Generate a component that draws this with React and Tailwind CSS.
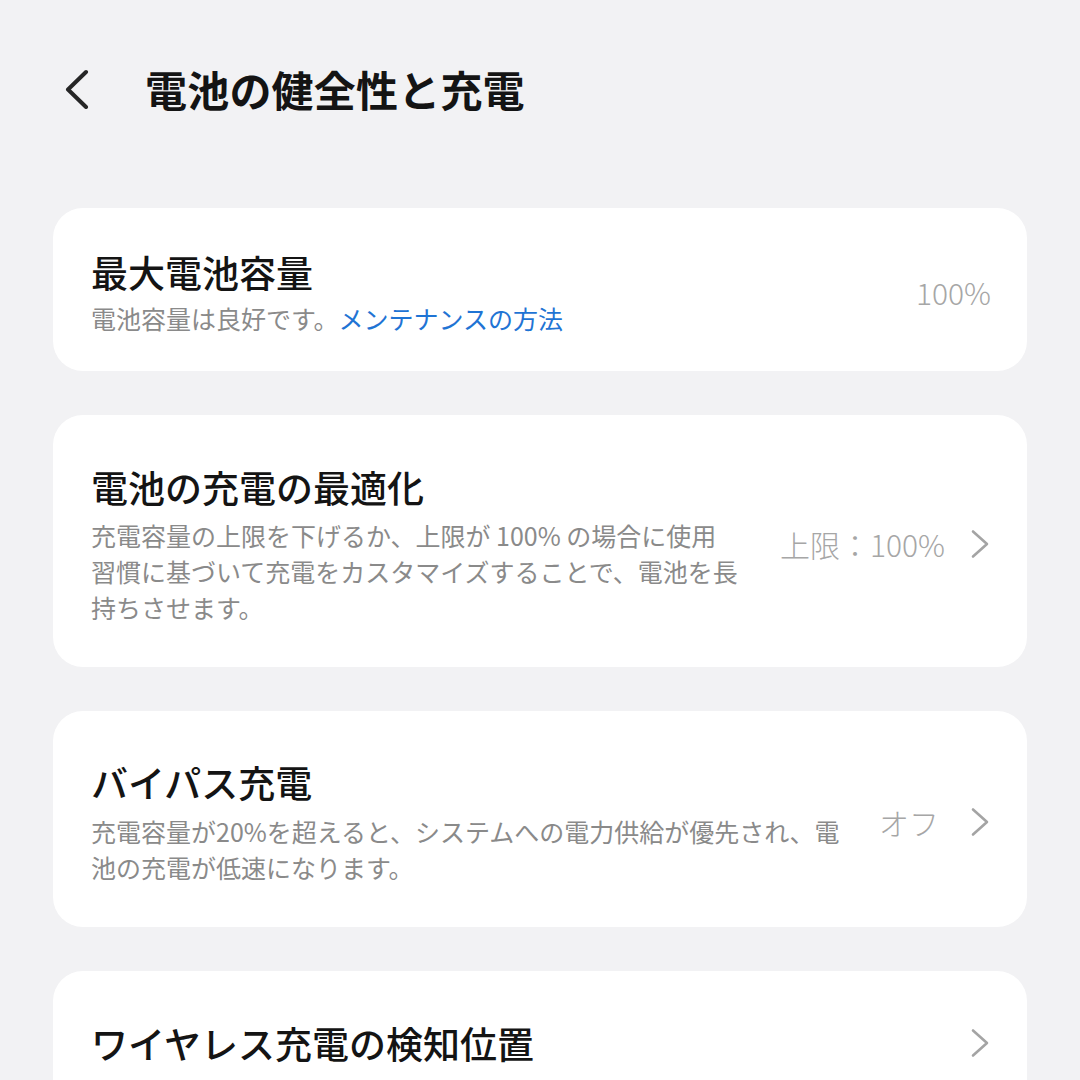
import React from "react";

const font = { fontFamily: '"Noto Sans CJK JP", "Noto Sans", sans-serif' };

function Chevron() {
  return (
    <svg width="22" height="30" viewBox="0 0 22 30" className="shrink-0">
      <path d="M4 2.5 L18 15 L4 27.5" fill="none" stroke="#a4a4a4" strokeWidth="2.6" strokeLinecap="round" strokeLinejoin="round" />
    </svg>
  );
}

export default function App() {
  return (
    <div className="w-[1080px] h-[1080px] overflow-hidden bg-[#f2f2f4] text-[#141414]" style={font}>
      <div className="h-[178px] flex items-center pl-[63px]">
        <svg width="28" height="40" viewBox="0 0 28 40" className="shrink-0">
          <path d="M23 3 L5 20.5 L23 38" fill="none" stroke="#262626" strokeWidth="4" strokeLinecap="round" strokeLinejoin="round" />
        </svg>
        <h1 className="ml-[54px] text-[42px] leading-[52px] font-bold tracking-[0.2px]">電池の健全性と充電</h1>
      </div>

      <div className="px-[53px] pt-[30px] flex flex-col gap-[44px]">
        {/* Card 1 */}
        <div className="bg-white rounded-[30px] pl-[38px] pr-[36px] pt-[40px] pb-[35px] flex items-center">
          <div className="flex-1 flex flex-col gap-[4px]">
            <div className="text-[37px] leading-[48px] font-medium">最大電池容量</div>
            <div className="text-[25px] leading-[36px] text-[#8a8a8a] whitespace-nowrap">
              電池容量は良好です。<span className="text-[#1f74d4]">メンテナンスの方法</span>
            </div>
          </div>
          <div className="text-[30px] leading-[40px] text-[#a6a6a6] font-light">100%</div>
        </div>

        {/* Card 2 */}
        <div className="bg-white rounded-[30px] pl-[38px] pr-[36px] pt-[48px] pb-[42px] flex items-center">
          <div className="flex-1 flex flex-col gap-[6px]">
            <div className="text-[37px] leading-[48px] font-medium">電池の充電の最適化</div>
            <div className="text-[25px] leading-[36px] text-[#8a8a8a] whitespace-nowrap flex flex-col">
              <span>充電容量の上限を下げるか、上限が 100% の場合に使用</span>
              <span>習慣に基づいて充電をカスタマイズすることで、電池を長</span>
              <span>持ちさせます。</span>
            </div>
          </div>
          <div className="flex items-center gap-[24px]">
            <div className="text-[30px] leading-[40px] text-[#a6a6a6] font-light whitespace-nowrap">上限：100%</div>
            <Chevron />
          </div>
        </div>

        {/* Card 3 */}
        <div className="bg-white rounded-[30px] pl-[38px] pr-[36px] pt-[47px] pb-[42px] flex items-center">
          <div className="flex-1 flex flex-col gap-[7px]">
            <div className="text-[37px] leading-[48px] font-medium">バイパス充電</div>
            <div className="text-[25px] leading-[36px] text-[#8a8a8a] whitespace-nowrap flex flex-col">
              <span>充電容量が20%を超えると、システムへの電力供給が優先され、電</span>
              <span>池の充電が低速になります。</span>
            </div>
          </div>
          <div className="flex items-center gap-[30px]">
            <div className="text-[30px] leading-[40px] text-[#a6a6a6] font-light whitespace-nowrap">オフ</div>
            <Chevron />
          </div>
        </div>

        {/* Card 4 */}
        <div className="bg-white rounded-[30px] pl-[38px] pr-[36px] pt-[48px] pb-[48px] flex items-center">
          <div className="flex-1">
            <div className="text-[37px] leading-[48px] font-medium">ワイヤレス充電の検知位置</div>
          </div>
          <Chevron />
        </div>
      </div>
    </div>
  );
}
